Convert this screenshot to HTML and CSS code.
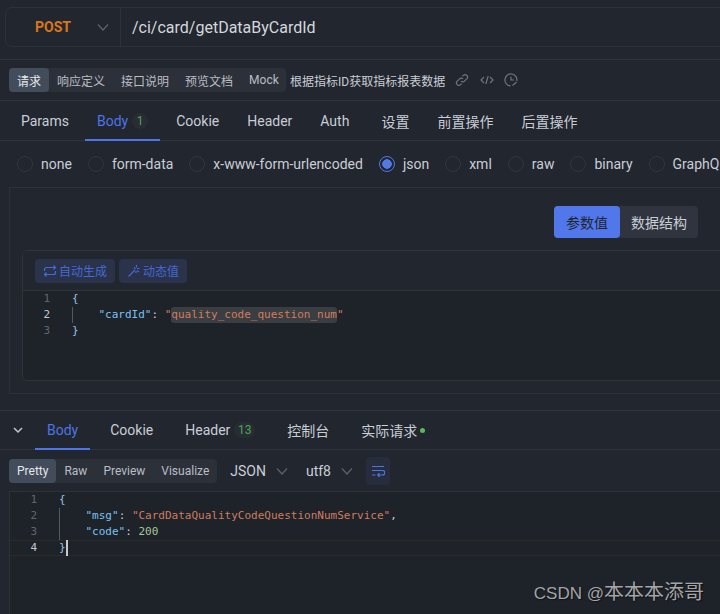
FILE: index.html
```html
<!DOCTYPE html>
<html lang="zh-CN">
<head>
<meta charset="utf-8">
<title>POST /ci/card/getDataByCardId</title>
<link rel="stylesheet" href="styles.css">
</head>
<body>
<div class="page">
  <section class="url-section">
    <div class="url-box">
      <div class="method"><span class="method-name">POST</span>
        <svg class="chev" width="12" height="12" viewBox="0 0 12 12"><path d="M1 3.500l5 5.500 5-5.500"/></svg>
      </div>
      <div class="url">/ci/card/getDataByCardId</div>
    </div>
  </section>

  <section class="doc-bar">
    <div class="seg">
      <span class="seg-item active">请求</span>
      <span class="seg-item">响应定义</span>
      <span class="seg-item">接口说明</span>
      <span class="seg-item">预览文档</span>
      <span class="seg-item">Mock</span>
    </div>
    <span class="doc-title">根据指标ID获取指标报表数据</span>
    <div class="doc-icons">
      <svg width="14" height="14" viewBox="0 0 14 14"><path d="M6 8.200a2.400 2.400 0 0 0 3.400 0l2.400-2.400A2.400 2.400 0 0 0 8.400 2.400l-1 1M8 5.800a2.400 2.400 0 0 0-3.400 0L2.200 8.200a2.400 2.400 0 0 0 3.400 3.400l1-1"/></svg>
      <svg width="14" height="14" viewBox="0 0 14 14"><path d="M4 4L1 7l3 3M10 4l3 3-3 3M8.200 3L5.800 11"/></svg>
      <svg width="14" height="14" viewBox="0 0 14 14"><path d="M12.800 8A6 6 0 1 0 6.500 12.900M7 3.800V7h3"/><path d="M8.500 12.500l4-3.500" class="thick"/></svg>
    </div>
  </section>

  <nav class="tabs req-tabs">
    <span class="tab">Params</span>
    <span class="tab on">Body<span class="badge">1</span></span>
    <span class="tab">Cookie</span>
    <span class="tab">Header</span>
    <span class="tab auth">Auth</span>
    <span class="tab">设置</span>
    <span class="tab">前置操作</span>
    <span class="tab">后置操作</span>
  </nav>

  <div class="radios">
    <label class="radio"><i></i>none</label>
    <label class="radio"><i></i>form-data</label>
    <label class="radio"><i></i>x-www-form-urlencoded</label>
    <label class="radio sel"><i></i>json</label>
    <label class="radio"><i></i>xml</label>
    <label class="radio"><i></i>raw</label>
    <label class="radio"><i></i>binary</label>
    <label class="radio"><i></i>GraphQL</label>
  </div>

  <section class="body-box">
    <div class="toggle-row">
      <div class="toggle"><span class="toggle-item on">参数值</span><span class="toggle-item">数据结构</span></div>
    </div>
    <div class="editor-card">
      <div class="editor-tools">
        <span class="tool">
          <svg width="14" height="14" viewBox="0 0 14 14"><path d="M1.500 7V5.500a2 2 0 0 1 2-2h9M10.500 1.500l2 2-2 2M12.500 7v1.500a2 2 0 0 1-2 2h-9M3.500 8.500l-2 2 2 2"/></svg>自动生成</span>
        <span class="tool">
          <svg width="14" height="14" viewBox="0 0 14 14"><path d="M1.500 12.500L8 6M9.500 1v2.500M12.500 4.500H10M7 3.500l1.500 1.500M12 8l-2-1.500M9 9V7"/></svg>动态值</span>
      </div>
      <div class="code req-code">
        <div class="ln"><b>1</b><code><span class="p">{</span></code></div>
        <div class="ln cur"><b>2</b><code><span class="guide"></span>    <span class="k">"cardId"</span>: <span class="s">"<span class="hl">quality_code_question_num</span>"</span></code></div>
        <div class="ln"><b>3</b><code><span class="p">}</span></code></div>
      </div>
    </div>
  </section>

  <section class="response">
    <nav class="tabs res-tabs">
      <svg class="collapse" width="10" height="7" viewBox="0 0 10 7"><path d="M1 1l4 4 4-4"/></svg>
      <span class="tab on">Body</span>
      <span class="tab">Cookie</span>
      <span class="tab">Header<span class="badge wide">13</span></span>
      <span class="tab">控制台</span>
      <span class="tab">实际请求<span class="dot"></span></span>
    </nav>
    <div class="res-bar">
      <div class="seg">
        <span class="seg-item active">Pretty</span>
        <span class="seg-item">Raw</span>
        <span class="seg-item">Preview</span>
        <span class="seg-item">Visualize</span>
      </div>
      <span class="select">JSON<svg class="chev" width="12" height="12" viewBox="0 0 12 12"><path d="M1 3.500l5 5.500 5-5.500"/></svg></span>
      <span class="select">utf8<svg class="chev" width="12" height="12" viewBox="0 0 12 12"><path d="M1 3.500l5 5.500 5-5.500"/></svg></span>
      <span class="wrap-btn"><svg width="14" height="14" viewBox="0 0 14 14"><path d="M1 2.500h12M1 6.500h10.500a1.700 1.700 0 0 1 0 4.500H7M8.500 9.300L6.700 11l1.800 1.700M1 11h3.500"/></svg></span>
    </div>
    <div class="code res-code">
      <div class="ln"><b>1</b><code><span class="p">{</span></code></div>
      <div class="ln"><b>2</b><code><span class="guide"></span>    <span class="k">"msg"</span>: <span class="s">"CardDataQualityCodeQuestionNumService"</span>,</code></div>
      <div class="ln"><b>3</b><code><span class="guide"></span>    <span class="k">"code"</span>: <span class="n">200</span></code></div>
      <div class="ln cur active-line"><b>4</b><code><span class="p">}</span><span class="caret"></span></code></div>
    </div>
    <div class="watermark">CSDN @<span class="wm-cjk">本本本添哥</span></div>
  </section>
</div>
</body>
</html>
```
FILE: styles.css
```css
* { box-sizing: border-box; }
html, body { margin: 0; height: 100%; }
body {
  background: #22262e;
  color: #c9ced6;
  font-family: Roboto, "Noto Sans CJK SC", sans-serif;
  overflow: hidden;
}
.page { width: 720px; height: 614px; overflow: hidden; display: flex; flex-direction: column; }

svg { fill: none; stroke: currentColor; stroke-width: 1.2; flex: none; }
.chev { color: #5d636d; }

.url-section { height: 60px; padding: 7px 0 0 5px; border-bottom: 1px solid #2f343c; flex: none; }
.url-box { width: 740px; height: 40px; display: flex; align-items: center; border: 1px solid #2d3139; border-radius: 7px; }
.method { width: 115px; height: 38px; flex: none; display: flex; align-items: center; padding-left: 29px; border-right: 1px solid #2d3139; }
.method-name { width: 62px; color: #d9761c; font-size: 14px; font-weight: 700; }
.url { padding-left: 11px; font-size: 16px; color: #d3d7dd; }

.doc-bar { height: 41px; flex: none; display: flex; align-items: center; padding: 0 0 0 9px; border-bottom: 1px solid #2f343c; }
.seg { display: flex; height: 24px; background: #2c3039; border-radius: 4px; flex: none; }
.seg-item { display: flex; align-items: center; padding: 0 8px; font-size: 12px; color: #b9bdc5; white-space: nowrap; }
.seg-item.active { background: #434c5a; color: #e4e7ec; border-radius: 4px; }
.doc-bar .seg { width: 277px; }
.doc-title { margin-left: 4px; font-size: 12px; color: #c9ced6; white-space: nowrap; }
.doc-icons { display: flex; gap: 10.500px; margin-left: 10px; color: #70757e; }

.tabs { display: flex; height: 40px; flex: none; gap: 4px; padding-left: 9px; border-bottom: 1px solid #2f343c; }
.tab { position: relative; display: flex; align-items: center; padding: 0 12px; font-size: 14px; color: #c9ced6; white-space: nowrap; }
.tab.auth { margin-right: 4px; }
.tab.on { color: #4d74e8; }
.tab.on::after { content: ""; position: absolute; left: 0; right: 0; bottom: -1px; height: 2px; background: #4d74e8; }
.badge { display: inline-flex; align-items: center; justify-content: center; width: 16px; height: 16px; margin-left: 4px; border-radius: 50%; background: #282d33; color: #4ea35a; font-size: 12px; }
.badge.wide { width: 21px; border-radius: 8px; }
.dot { width: 5px; height: 5px; margin-left: 3px; border-radius: 50%; background: #57b85f; }

.radios { height: 46px; flex: none; display: flex; align-items: center; padding-left: 17px; gap: 16px; }
.radio { display: flex; align-items: center; gap: 8px; font-size: 14px; color: #c9ced6; white-space: nowrap; flex: none; }
.radio i { width: 16px; height: 16px; border: 1px solid #31353d; border-radius: 50%; }
.radio.sel i { border-color: #5378e8; background: radial-gradient(circle, #5378e8 0 4.500px, transparent 5px); }

.body-box { width: 730px; height: 207px; flex: none; margin-left: 9px; padding: 18px 0 0 12px; border: 1px solid #2d3139; border-right: 0; }
.toggle-row { display: flex; width: 676px; justify-content: flex-end; }
.toggle { display: flex; height: 32px; background: #30343e; border-radius: 4px; }
.toggle-item { display: flex; align-items: center; padding: 0 11px; font-size: 14px; color: #c9ced6; }
.toggle-item.on { width: 66px; justify-content: center; padding: 0; background: #5277ea; color: #1f2530; border-radius: 4px; }
.editor-card { width: 720px; height: 131px; margin-top: 12px; border: 1px solid #2f343c; border-radius: 5px; overflow: hidden; background: #1e2229; }
.editor-tools { height: 40px; display: flex; align-items: center; gap: 4px; padding-left: 12px; background: #22262e; border-bottom: 1px solid #2f343c; }
.tool { display: flex; align-items: center; gap: 2px; height: 24px; padding: 0 8px; background: #2a3349; color: #4469d8; border-radius: 4px; font-size: 12px; white-space: nowrap; }

.code { font-family: "DejaVu Sans Mono", monospace; font-size: 11px; line-height: 16px; }
.ln { display: flex; height: 16px; }
.ln b { flex: none; width: 27px; margin-right: 22px; text-align: right; font-weight: 400; color: #5f666f; }
.ln code { font: inherit; white-space: pre; position: relative; color: #c9ced6; }
.ln.cur b { color: #c6cad0; }
.guide { position: absolute; left: 0; top: 0; width: 1px; height: 16px; background: #55595f; }
.p { color: #8fc3e8; }
.k { color: #79c3f0; }
.s { color: #cf7d5e; }
.n { color: #a5c796; }
.hl { display: inline-block; background: #3a3d41; border-radius: 3px; }

.response { position: relative; flex: 1; margin-top: 16px; border-top: 1px solid #2f343c; min-height: 0; }
.res-tabs { height: 39px; gap: 8px; align-items: stretch; padding-left: 13px; }
.collapse { align-self: center; color: #c2c7cf; stroke-width: 1.500; margin-right: 4px; }
.res-bar { height: 41px; display: flex; align-items: center; padding: 1px 0 0 9px; }
.res-bar .seg { margin-right: 13px; }
.select { display: flex; align-items: center; gap: 10px; margin-right: 18px; font-size: 14px; color: #c9ced6; }
.wrap-btn { display: flex; align-items: center; justify-content: center; width: 24px; height: 28px; margin-left: -5px; border-radius: 4px; background: #272d3c; color: #4d74e8; }
.res-code { height: 123px; margin-left: 9px; background: #1e2229; border-top: 1px solid #2d3139; border-left: 1px solid #2d3139; }
.active-line { width: 720px; border-top: 1px solid #2c2a27; border-bottom: 1px solid #2c2a27; line-height: 14px; }
.caret { display: inline-block; width: 2px; height: 16px; vertical-align: top; background: #c6cad0; margin-top: -1px; }
.watermark { position: absolute; right: 16px; bottom: 9px; font-family: "Liberation Sans", "Noto Sans CJK SC", sans-serif; font-size: 17px; color: #a3a5a8; text-shadow: 1px 1px 1px #111; white-space: nowrap; }
.wm-cjk { font-size: 20px; }
```
